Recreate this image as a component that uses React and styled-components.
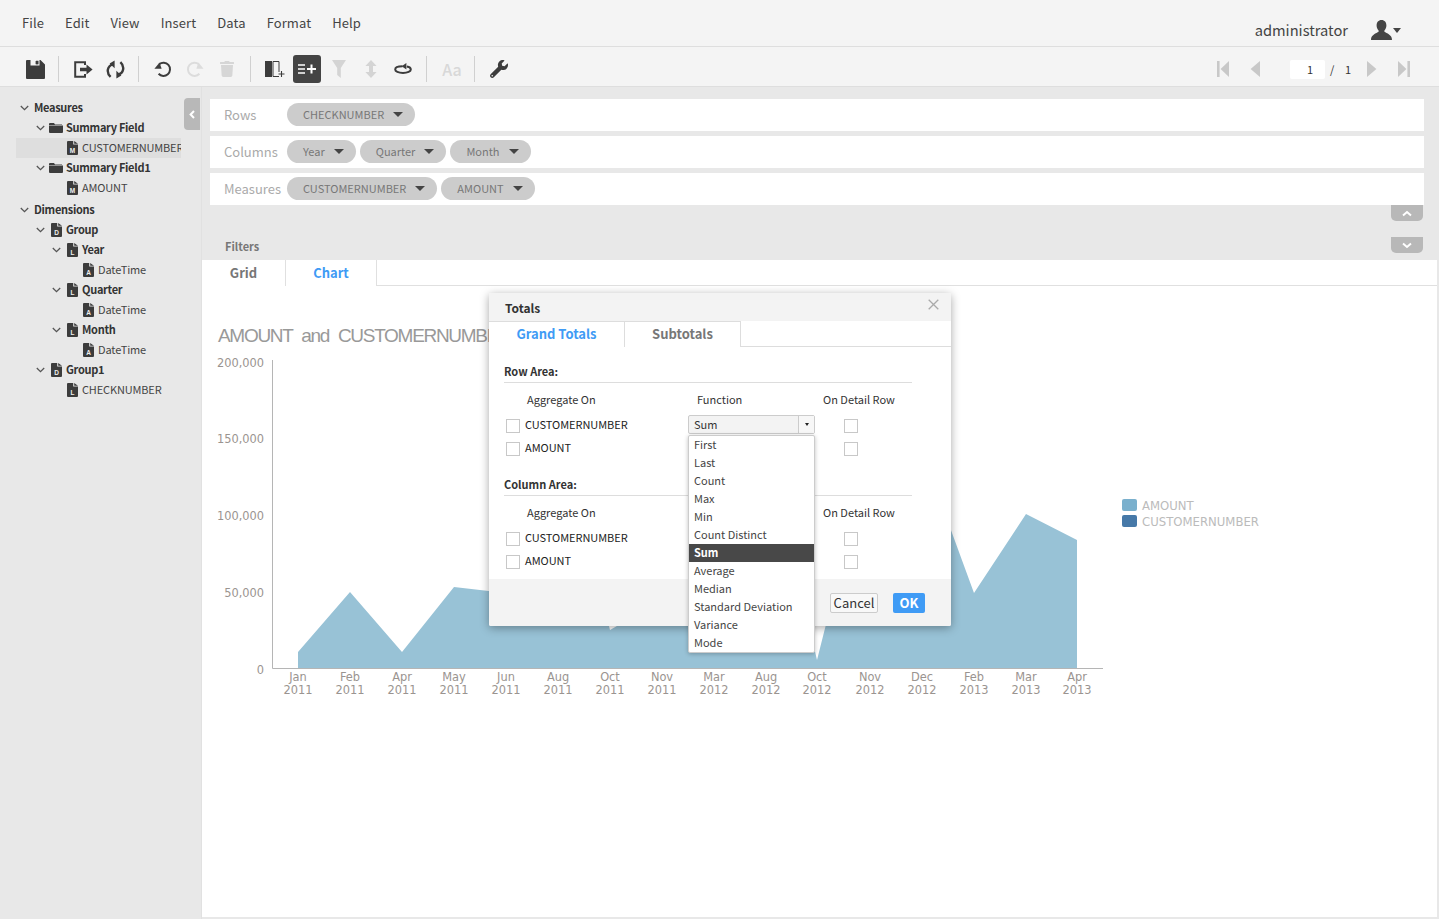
import React from "react";
import styled, { createGlobalStyle } from "styled-components";
import { FaWrench, FaTrash } from "react-icons/fa";

const FONT = '"Noto Sans CJK SC", "Noto Sans", sans-serif';

const GlobalStyle = createGlobalStyle`
  html, body {
    margin: 0;
    padding: 0;
    height: 100%;
    background: #e8e8e8;
    font-family: ${FONT};
    color: #333;
  }
  * {
    box-sizing: border-box;
  }
`;

const Page = styled.div`
  position: relative;
  width: 1439px;
  height: 919px;
  display: flex;
  flex-direction: column;
  overflow: hidden;
`;

const MenuBar = styled.div`
  height: 47px;
  flex: none;
  display: flex;
  justify-content: space-between;
  background: #f4f4f4;
  border-bottom: 1px solid #dedede;
  padding: 0 38px 0 22px;
`;

const Menu = styled.div`
  display: flex;
  gap: 21px;
  height: 46px;
  align-items: center;
`;

const MenuItem = styled.span`
  font-size: 13px;
  line-height: 20px;
  letter-spacing: 0.1px;
  color: #444;
`;

const UserArea = styled.div`
  display: flex;
  align-items: center;
  height: 46px;
  padding-top: 14px;
`;

const UserName = styled.span`
  font-size: 14.7px;
  line-height: 20px;
  color: #444;
  margin-right: 23px;
`;

const UserCaret = styled.span`
  width: 0;
  height: 0;
  margin-left: 1px;
  border-left: 4.5px solid transparent;
  border-right: 4.5px solid transparent;
  border-top: 5px solid #444;
`;

const Toolbar = styled.div`
  height: 40px;
  flex: none;
  display: flex;
  align-items: center;
  justify-content: space-between;
  background: #f4f4f4;
  border-bottom: 1px solid #dedede;
  padding: 5px 19px 0;
`;

const ToolGroup = styled.div`
  display: flex;
  align-items: center;
`;

const ToolButton = styled.span`
  width: 32px;
  height: 28px;
  display: flex;
  align-items: center;
  justify-content: center;
  color: ${(p) => (p.$off ? "#d6d6d6" : "#3c3c3c")};
  font-size: ${(p) => p.$size || 18}px;
`;

const ActiveTool = styled.span`
  width: 28px;
  height: 28px;
  margin: 0 2px;
  border-radius: 3px;
  background: #444;
  display: flex;
  align-items: center;
  justify-content: center;
`;

const AaGlyph = styled.span`
  font-size: 16px;
  font-weight: 500;
  line-height: 20px;
  color: #d8d8d8;
  margin-left: 2px;
`;

const ToolDivider = styled.span`
  width: 1px;
  height: 26px;
  margin: 0 8px 0 7px;
  background: #d0d0d0;
`;

const Pager = styled.div`
  display: flex;
  align-items: center;
`;

const PagerIcon = styled.span`
  width: 32px;
  display: flex;
  justify-content: center;
`;

const PageInput = styled.span`
  width: 35px;
  height: 19px;
  margin-left: 19px;
  padding-right: 12px;
  background: #fff;
  border-radius: 2px;
  text-align: right;
  font-size: 11px;
  line-height: 19px;
  color: #333;
`;

const PageOf = styled.span`
  font-size: 11px;
  line-height: 19px;
  color: #333;
  margin: 0 5px;
  width: 21px;
  display: flex;
  justify-content: space-between;
`;

const Body = styled.div`
  flex: 1;
  display: flex;
  min-height: 0;
`;

const Sidebar = styled.div`
  position: relative;
  width: 202px;
  flex: none;
  background: #e8e8e8;
  border-right: 1px solid #e1e1e1;
  padding: 11px 0 0 16px;
`;

const CollapseTab = styled.span`
  position: absolute;
  top: 11px;
  right: 1px;
  width: 16px;
  height: 32px;
  background: #b8b8b8;
  border-radius: 4px 0 0 4px;
  display: flex;
  align-items: center;
  justify-content: center;
`;

const Tree = styled.div`
  width: 165px;
`;

const TreeRow = styled.div`
  height: 20px;
  display: flex;
  align-items: center;
  overflow: hidden;
  white-space: nowrap;
  margin-top: ${(p) => (p.$gap ? "2px" : "0")};
  padding-left: ${(p) => 4 + p.$depth * 16}px;
  background: ${(p) => (p.$selected ? "#dedede" : "transparent")};
`;

const ChevronSlot = styled.span`
  width: 13px;
  flex: none;
  display: flex;
`;

const IconSlot = styled.span`
  width: 14px;
  margin-right: 3px;
  flex: none;
  display: flex;
  justify-content: center;
`;

const TreeLabel = styled.span`
  font-size: 11px;
  line-height: 18px;
  padding-bottom: 2px;
  font-weight: ${(p) => (p.$bold ? 700 : 400)};
  letter-spacing: ${(p) => (p.$bold ? "-0.3px" : "-0.15px")};
  margin-left: ${(p) => (p.$plain ? "1px" : "0")};
  color: ${(p) => (p.$bold ? "#333" : "#444")};
`;

const Main = styled.div`
  flex: 1;
  display: flex;
  flex-direction: column;
  min-width: 0;
  background: #fff;
  margin-right: 2px;
  margin-bottom: 2px;
`;

const BindingPanel = styled.div`
  height: 173px;
  flex: none;
  background: #e8e8e8;
  padding: 12px 0 0 8px;
  margin-right: -2px;
`;

const BindingRow = styled.div`
  height: 32px;
  width: 1214px;
  margin-bottom: 5px;
  padding: 4px 0 0 14px;
  background: #fff;
  display: flex;
  gap: 4px;
`;

const BindingLabel = styled.span`
  width: 59px;
  flex: none;
  font-size: 13px;
  line-height: 24px;
  color: #aaa;
  white-space: nowrap;
`;

const Chip = styled.span`
  height: 23px;
  display: flex;
  align-items: center;
  padding: 0 12px 0 16px;
  border-radius: 12px;
  background: #ccc;
  color: #777;
  font-size: 11px;
  line-height: 23px;
`;

const ChipCaret = styled.span`
  width: 0;
  height: 0;
  margin-left: 9px;
  border-left: 5px solid transparent;
  border-right: 5px solid transparent;
  border-top: 5px solid #444;
`;

const ShadeButton = styled.span`
  width: 32px;
  height: 16px;
  background: #b8b8b8;
  border-radius: 0 0 5px 5px;
  display: flex;
  align-items: center;
  justify-content: center;
`;

const ShadeUpRow = styled.div`
  height: 32px;
  margin-top: -5px;
  width: 1213px;
  display: flex;
  justify-content: flex-end;
`;

const FilterRow = styled.div`
  width: 1213px;
  display: flex;
  align-items: flex-start;
  justify-content: space-between;
  padding-left: 15px;
`;

const FilterLabel = styled.span`
  font-size: 11px;
  font-weight: 700;
  line-height: 19px;
  color: #777;
`;

const TabBar = styled.div`
  height: 26px;
  flex: none;
  display: flex;
  background: #fff;
  border-bottom: 1px solid #e0e0e0;
`;

const Tab = styled.span`
  width: ${(p) => p.$w}px;
  height: 26px;
  text-align: center;
  font-size: 13px;
  font-weight: 700;
  line-height: 25px;
  color: ${(p) => (p.$active ? "#3f9bf5" : "#777")};
  background: #fff;
  border-right: 1px solid #e0e0e0;
`;

const ChartArea = styled.div`
  flex: 1;
  background: #fff;
`;

const ChartSvg = styled.svg`
  display: block;
`;

const AxisText = styled.text`
  font-family: "DejaVu Sans", sans-serif;
  font-size: 11.4px;
  fill: #9a9490;
`;

const TitleText = styled.text`
  font-family: "Liberation Sans", sans-serif;
  font-size: 19px;
  letter-spacing: -1.3px;
  word-spacing: 5px;
  fill: #999;
`;

const LegendText = styled.text`
  font-family: "DejaVu Sans", sans-serif;
  font-size: 11.7px;
  fill: #bbb;
`;

const Dialog = styled.div`
  position: absolute;
  top: 293px;
  left: 489px;
  width: 462px;
  background: #fff;
  border-radius: 2px;
  box-shadow: 0 2px 10px rgba(0, 0, 0, 0.35);
`;

const DialogHead = styled.div`
  height: 28px;
  padding: 5px 12px 0 16px;
  background: #f3f3f3;
  display: flex;
  align-items: flex-start;
  justify-content: space-between;
  border-radius: 2px 2px 0 0;
`;

const DialogTitle = styled.span`
  font-size: 12px;
  font-weight: 700;
  line-height: 20px;
  color: #333;
`;

const DialogTabs = styled.div`
  height: 26px;
  display: flex;
  border-bottom: 1px solid #ddd;
`;

const DialogTab = styled.span`
  height: 26px;
  width: ${(p) => p.$w}px;
  text-align: center;
  font-size: 13px;
  font-weight: 700;
  line-height: 24px;
  color: ${(p) => (p.$active ? "#3f9bf5" : "#777")};
  background: #fff;
  border-top: 1px solid #ddd;
  border-right: 1px solid #ddd;
`;

const DialogBody = styled.div`
  padding: 15px 39px 6px 15px;
`;

const AreaTitle = styled.div`
  height: 21px;
  font-size: 11px;
  font-weight: 700;
  line-height: 19px;
  color: #333;
  border-bottom: 1px solid #ddd;
  margin-top: ${(p) => (p.$first ? "0" : "15px")};
`;

const AreaGrid = styled.div`
  display: grid;
  grid-template-columns: 184px 135px 1fr;
  grid-template-rows: 31px 23px 23px;
`;

const GridHead = styled.div`
  grid-column: 1 / 4;
  display: grid;
  grid-template-columns: 184px 135px 1fr;
  height: 31px;
  padding-top: 2px;
  font-size: 11px;
  line-height: 28px;
  color: #333;
`;

const HeadCell = styled.span`
  padding-left: ${(p) => p.$pad}px;
`;

const FieldCell = styled.div`
  display: flex;
  align-items: center;
  padding-left: 2px;
  gap: 5px;
  font-size: 11px;
  color: #222;
`;

const FieldName = styled.span`
  line-height: 16px;
  padding-bottom: 3px;
  letter-spacing: -0.05px;
`;

const CheckBox = styled.span`
  width: 14px;
  height: 14px;
  flex: none;
  display: block;
  background: #fff;
  border: 1px solid #c8c8c8;
  margin-left: ${(p) => p.$left || 0}px;
`;

const DetailCell = styled.div`
  display: flex;
  align-items: center;
`;

const SelectCell = styled.div`
  position: relative;
  display: flex;
  align-items: center;
`;

const SelectBox = styled.div`
  width: 127px;
  height: 19px;
  margin-bottom: 2px;
  display: flex;
  background: #f3f3f3;
  border: 1px solid #ccc;
  border-radius: 2px;
  font-size: 11px;
  line-height: 17px;
  color: #333;
`;

const SelectValue = styled.span`
  flex: 1;
  padding-left: 5px;
`;

const SelectArrow = styled.span`
  width: 16px;
  border-left: 1px solid #ccc;
  display: flex;
  align-items: center;
  justify-content: center;
  background: #f7f7f7;
  &::after {
    content: "";
    border-left: 2.5px solid transparent;
    border-right: 2.5px solid transparent;
    border-top: 3px solid #222;
  }
`;

const OptionList = styled.div`
  position: absolute;
  top: 21px;
  left: 0;
  width: 127px;
  background: #fff;
  border: 1px solid #ccc;
  border-radius: 2px;
  box-shadow: 0 1px 4px rgba(0, 0, 0, 0.25);
  z-index: 2;
`;

const Option = styled.div`
  height: 18px;
  padding-left: 5px;
  font-size: 11px;
  line-height: 16px;
  color: ${(p) => (p.$on ? "#fff" : "#444")};
  font-weight: ${(p) => (p.$on ? 700 : 400)};
  background: ${(p) => (p.$on ? "#484848" : "transparent")};
`;

const DialogFoot = styled.div`
  height: 47px;
  padding: 14px 26px 0 0;
  background: #f3f3f3;
  display: flex;
  justify-content: flex-end;
  gap: 15px;
  border-radius: 0 0 2px 2px;
`;

const CancelButton = styled.span`
  width: 48px;
  height: 20px;
  border: 1px solid #ccc;
  border-radius: 2px;
  background: #f8f8f8;
  text-align: center;
  font-size: 13px;
  line-height: 17px;
  color: #333;
`;

const OkButton = styled.span`
  width: 32px;
  height: 20px;
  border-radius: 2px;
  background: #3f9bf5;
  text-align: center;
  font-size: 13px;
  font-weight: 700;
  line-height: 19px;
  color: #fff;
`;

const Chevron = () => (
  <svg width="9" height="6" viewBox="0 0 9 6">
    <path d="M0.8 1 L4.5 4.6 L8.2 1" fill="none" stroke="#555" strokeWidth="1.3" />
  </svg>
);

const FolderIcon = () => (
  <svg width="14" height="10" viewBox="0 0 14 10">
    <path d="M0 2.5h14v6.5a1 1 0 0 1-1 1H1a1 1 0 0 1-1-1z M1 0h4l1 1.5h7v0.4H0V1a1 1 0 0 1 1-1z" fill="#3c3c3c" />
  </svg>
);

const FileIcon = ({ letter }) => (
  <svg width="11" height="14" viewBox="0 0 11 14">
    <path d="M1 0h5.2v3.6H11V13a1 1 0 0 1-1 1H1a1 1 0 0 1-1-1V1a1 1 0 0 1 1-1z M7.2 0L11 2.8H7.2z" fill="#3c3c3c" />
    <text x="5.5" y="12.2" textAnchor="middle" fontSize="6.5" fontWeight="700" fill="#f0f0f0" fontFamily="Liberation Sans, sans-serif">
      {letter}
    </text>
  </svg>
);

const SaveIcon = () => (
  <svg width="19" height="19" viewBox="0 0 19 19">
    <path
      fillRule="evenodd"
      d="M1 0h3.5v5.5h9V0h1L19 4.5V18a1 1 0 0 1-1 1H1a1 1 0 0 1-1-1V1a1 1 0 0 1 1-1z M10 0.8h2.4v3.4H10z"
      fill="#3c3c3c"
    />
    <rect x="9.6" y="1" width="2.6" height="3.2" fill="#3c3c3c" />
  </svg>
);

const ExportIcon = () => (
  <svg width="19" height="17" viewBox="0 0 19 17">
    <path d="M11 4V1.2H1.2v14.6H11V13" fill="none" stroke="#3c3c3c" strokeWidth="2" />
    <path d="M6 6.8h6.5V3.6L18.6 8.5l-6.1 4.9V10.2H6z" fill="#3c3c3c" />
  </svg>
);

const RefreshIcon = () => (
  <svg width="19" height="19" viewBox="0 0 19 19">
    <path d="M7 4.4C1.2 5.8 0 12.6 4.6 16.8" fill="none" stroke="#3c3c3c" strokeWidth="2.4" />
    <path d="M8.6 0.4v7.8L3.6 3.4z" fill="#3c3c3c" />
    <path d="M12 14.6C17.8 13.2 19 6.4 14.4 2.2" fill="none" stroke="#3c3c3c" strokeWidth="2.4" />
    <path d="M10.4 18.6v-7.8l5 4.8z" fill="#3c3c3c" />
  </svg>
);

const CircleArrow = ({ color, flip }) => (
  <svg width="18" height="18" viewBox="0 0 18 18" style={flip ? { transform: "scaleX(-1)" } : undefined}>
    <path d="M5.2 4.2A6.6 6.6 0 1 1 4.6 13.8" fill="none" stroke={color} strokeWidth="2" />
    <path d="M0.4 8.8h7.2L5.6 2.6z" fill={color} />
  </svg>
);

const ColumnsAddIcon = () => (
  <svg width="20" height="18" viewBox="0 0 20 18">
    <rect x="0" y="1" width="7" height="16" fill="#3c3c3c" />
    <path d="M8 1.5h6V12M14 16.5H8V1.5" fill="none" stroke="#3c3c3c" />
    <path d="M13.5 14h6M16.5 11v6" stroke="#3c3c3c" strokeWidth="1.1" />
  </svg>
);

const RowsAddIcon = () => (
  <svg width="18" height="12" viewBox="0 0 18 12">
    <path d="M0 2h7M0 6h7M0 10h7" stroke="#fff" strokeWidth="1.6" />
    <path d="M9 6h9M13.5 1.5v9" stroke="#fff" strokeWidth="2" />
  </svg>
);

const FunnelIcon = () => (
  <svg width="14" height="18" viewBox="0 0 14 18">
    <path d="M0 0h14L8.8 8v10L5.2 15V8z" fill="#d4d4d4" />
  </svg>
);

const UpDownIcon = () => (
  <svg width="12" height="18" viewBox="0 0 12 18">
    <path d="M6 0l5.6 6H8v6h3.6L6 18 0.4 12H4V6H0.4z" fill="#d4d4d4" />
  </svg>
);

const LoopIcon = () => (
  <svg width="18" height="12" viewBox="0 0 18 12">
    <path d="M8.5 3.2C3.6 3.2 1.2 4.6 1.2 6.4 1.2 8.4 4.4 10 9 10s7.8-1.6 7.8-3.6c0-1.4-1.4-2.6-4-3" fill="none" stroke="#3c3c3c" strokeWidth="2" />
    <path d="M12.4 0L7.6 3.2l4.8 3.2z" fill="#3c3c3c" />
  </svg>
);

const PagerGlyph = ({ kind }) => {
  const flip = kind === "last" || kind === "next";
  const bar = kind === "first" || kind === "last";
  return (
    <svg width="12" height="16" viewBox="0 0 12 16" style={flip ? { transform: "scaleX(-1)" } : undefined}>
      {bar && <rect x="0" y="0" width="2.6" height="16" fill="#c8c8c8" />}
      <path d={bar ? "M12 0v16L3.6 8z" : "M11 0v16L1.6 8z"} fill="#c8c8c8" />
    </svg>
  );
};

const UserIcon = () => (
  <svg width="21" height="20" viewBox="0 0 21 20">
    <path
      d="M10.5 0C7.4 0 5.6 2.4 5.6 5.4c0 2 .8 3.8 2 5v1.4C5.4 13.4 0 14.6 0 20h21c0-5.4-5.4-6.6-7.6-8.2v-1.4c1.2-1.2 2-3 2-5C15.4 2.4 13.6 0 10.5 0z"
      fill="#444"
    />
  </svg>
);

const SmallChevron = ({ dir }) => {
  const d = { left: "M5 1L1.6 4.5L5 8", up: "M1 5.4L5 2L9 5.4", down: "M1 1.6L5 5L9 1.6" }[dir];
  return (
    <svg width={dir === "left" ? 7 : 10} height={dir === "left" ? 9 : 7} viewBox={dir === "left" ? "0 0 7 9" : "0 0 10 7"}>
      <path d={d} fill="none" stroke="#fff" strokeWidth="2" />
    </svg>
  );
};

const CloseIcon = () => (
  <svg width="11" height="11" viewBox="0 0 11 11" style={{ marginTop: "1px" }}>
    <path d="M0.7 0.7L10.3 10.3M10.3 0.7L0.7 10.3" stroke="#aaa" strokeWidth="1.3" />
  </svg>
);

const treeRows = [
  { depth: 0, open: true, label: "Measures", bold: true },
  { depth: 1, open: true, label: "Summary Field", bold: true, icon: "folder" },
  { depth: 2, label: "CUSTOMERNUMBER", icon: "M", selected: true },
  { depth: 1, open: true, label: "Summary Field1", bold: true, icon: "folder" },
  { depth: 2, label: "AMOUNT", icon: "M" },
  { depth: 0, open: true, label: "Dimensions", bold: true, gap: true },
  { depth: 1, open: true, label: "Group", bold: true, icon: "D" },
  { depth: 2, open: true, label: "Year", bold: true, icon: "L" },
  { depth: 3, label: "DateTime", icon: "A" },
  { depth: 2, open: true, label: "Quarter", bold: true, icon: "L" },
  { depth: 3, label: "DateTime", icon: "A" },
  { depth: 2, open: true, label: "Month", bold: true, icon: "L" },
  { depth: 3, label: "DateTime", icon: "A" },
  { depth: 1, open: true, label: "Group1", bold: true, icon: "D" },
  { depth: 2, label: "CHECKNUMBER", icon: "L" },
];

const bindings = [
  { label: "Rows", chips: ["CHECKNUMBER"] },
  { label: "Columns", chips: ["Year", "Quarter", "Month"] },
  { label: "Measures", chips: ["CUSTOMERNUMBER", "AMOUNT"] },
];

const functions = [
  "First",
  "Last",
  "Count",
  "Max",
  "Min",
  "Count Distinct",
  "Sum",
  "Average",
  "Median",
  "Standard Deviation",
  "Variance",
  "Mode",
];

const BASE_Y = 668;
const points = [
  ["Jan", "2011", 298, 652],
  ["Feb", "2011", 350, 592],
  ["Apr", "2011", 402, 652],
  ["May", "2011", 454, 587],
  ["Jun", "2011", 506, 593],
  ["Aug", "2011", 558, 420],
  ["Oct", "2011", 610, 630],
  ["Nov", "2011", 662, 600],
  ["Mar", "2012", 714, 480],
  ["Aug", "2012", 766, 440],
  ["Oct", "2012", 817, 660],
  ["Nov", "2012", 870, 450],
  ["Dec", "2012", 922, 451],
  ["Feb", "2013", 974, 593],
  ["Mar", "2013", 1026, 514],
  ["Apr", "2013", 1077, 540],
];

const yTicks = [
  ["200,000", 362],
  ["150,000", 438],
  ["100,000", 515],
  ["50,000", 592],
  ["0", 669],
];

const areaPath =
  `M${points[0][2]} ${BASE_Y} ` +
  points.map((p) => `L${p[2]} ${p[3]}`).join(" ") +
  ` L${points[points.length - 1][2]} ${BASE_Y} Z`;

const AreaSection = ({ title, first, withSelect }) => (
  <>
    <AreaTitle $first={first}>{title}</AreaTitle>
    <AreaGrid>
      <GridHead>
        <HeadCell $pad={23}>Aggregate On</HeadCell>
        <HeadCell $pad={9}>{withSelect ? "Function" : ""}</HeadCell>
        <HeadCell $pad={0}>On Detail Row</HeadCell>
      </GridHead>
      <FieldCell>
        <CheckBox />
        <FieldName>CUSTOMERNUMBER</FieldName>
      </FieldCell>
      <SelectCell>
        {withSelect && (
          <>
            <SelectBox>
              <SelectValue>Sum</SelectValue>
              <SelectArrow />
            </SelectBox>
            <OptionList>
              {functions.map((f) => (
                <Option key={f} $on={f === "Sum"}>
                  {f}
                </Option>
              ))}
            </OptionList>
          </>
        )}
      </SelectCell>
      <DetailCell>
        <CheckBox $left={21} />
      </DetailCell>
      <FieldCell>
        <CheckBox />
        <FieldName>AMOUNT</FieldName>
      </FieldCell>
      <SelectCell />
      <DetailCell>
        <CheckBox $left={21} />
      </DetailCell>
    </AreaGrid>
  </>
);

const App = () => (
  <Page>
    <GlobalStyle />
    <MenuBar>
      <Menu>
        {["File", "Edit", "View", "Insert", "Data", "Format", "Help"].map((m) => (
          <MenuItem key={m}>{m}</MenuItem>
        ))}
      </Menu>
      <UserArea>
        <UserName>administrator</UserName>
        <UserIcon />
        <UserCaret />
      </UserArea>
    </MenuBar>
    <Toolbar>
      <ToolGroup>
        <ToolButton><SaveIcon /></ToolButton>
        <ToolDivider />
        <ToolButton><ExportIcon /></ToolButton>
        <ToolButton><RefreshIcon /></ToolButton>
        <ToolDivider />
        <ToolButton><CircleArrow color="#3c3c3c" /></ToolButton>
        <ToolButton><CircleArrow color="#dcdcdc" flip /></ToolButton>
        <ToolButton $off $size={16}><FaTrash /></ToolButton>
        <ToolDivider />
        <ToolButton><ColumnsAddIcon /></ToolButton>
        <ActiveTool><RowsAddIcon /></ActiveTool>
        <ToolButton><FunnelIcon /></ToolButton>
        <ToolButton><UpDownIcon /></ToolButton>
        <ToolButton><LoopIcon /></ToolButton>
        <ToolDivider />
        <ToolButton><AaGlyph>Aa</AaGlyph></ToolButton>
        <ToolDivider />
        <ToolButton><FaWrench /></ToolButton>
      </ToolGroup>
      <Pager>
        <PagerIcon><PagerGlyph kind="first" /></PagerIcon>
        <PagerIcon><PagerGlyph kind="prev" /></PagerIcon>
        <PageInput>1</PageInput>
        <PageOf>
          <span>/</span>
          <span>1</span>
        </PageOf>
        <PagerIcon><PagerGlyph kind="next" /></PagerIcon>
        <PagerIcon><PagerGlyph kind="last" /></PagerIcon>
      </Pager>
    </Toolbar>
    <Body>
      <Sidebar>
        <CollapseTab><SmallChevron dir="left" /></CollapseTab>
        <Tree>
          {treeRows.map((r, i) => (
            <TreeRow key={i} $depth={r.depth} $gap={r.gap} $selected={r.selected}>
              <ChevronSlot>{r.open && <Chevron />}</ChevronSlot>
              {r.icon && (
                <IconSlot>
                  {r.icon === "folder" ? <FolderIcon /> : <FileIcon letter={r.icon} />}
                </IconSlot>
              )}
              <TreeLabel $bold={r.bold} $plain={!r.icon}>{r.label}</TreeLabel>
            </TreeRow>
          ))}
        </Tree>
      </Sidebar>
      <Main>
        <BindingPanel>
          {bindings.map((b) => (
            <BindingRow key={b.label}>
              <BindingLabel>{b.label}</BindingLabel>
              {b.chips.map((c) => (
                <Chip key={c}>
                  {c}
                  <ChipCaret />
                </Chip>
              ))}
            </BindingRow>
          ))}
          <ShadeUpRow>
            <ShadeButton><SmallChevron dir="up" /></ShadeButton>
          </ShadeUpRow>
          <FilterRow>
            <FilterLabel>Filters</FilterLabel>
            <ShadeButton><SmallChevron dir="down" /></ShadeButton>
          </FilterRow>
        </BindingPanel>
        <TabBar>
          <Tab $w={84}>Grid</Tab>
          <Tab $w={91} $active>Chart</Tab>
        </TabBar>
        <ChartArea>
          <ChartSvg width="1235" height="440" viewBox="202 286 1235 440">
            <TitleText x="218" y="342">AMOUNT and CUSTOMERNUMBER</TitleText>
            {yTicks.map(([t, y]) => (
              <AxisText key={t} x="264" y={y + 5} textAnchor="end">{t}</AxisText>
            ))}
            <path d={areaPath} fill="#98c2d6" />
            <path d="M272.5 360V668.5H1103" fill="none" stroke="#b5b5b5" />
            {points.map(([m, year, x]) => (
              <g key={m + year}>
                <AxisText x={x} y="681" textAnchor="middle">{m}</AxisText>
                <AxisText x={x} y="694" textAnchor="middle">{year}</AxisText>
              </g>
            ))}
            <rect x="1122" y="499" width="15" height="12" rx="2" fill="#7ab0cd" />
            <rect x="1122" y="515" width="15" height="12" rx="2" fill="#4679a8" />
            <LegendText x="1142" y="510">AMOUNT</LegendText>
            <LegendText x="1142" y="526">CUSTOMERNUMBER</LegendText>
          </ChartSvg>
        </ChartArea>
      </Main>
    </Body>
    <Dialog>
      <DialogHead>
        <DialogTitle>Totals</DialogTitle>
        <CloseIcon />
      </DialogHead>
      <DialogTabs>
        <DialogTab $w={136} $active>Grand Totals</DialogTab>
        <DialogTab $w={116}>Subtotals</DialogTab>
      </DialogTabs>
      <DialogBody>
        <AreaSection title="Row Area:" first withSelect />
        <AreaSection title="Column Area:" />
      </DialogBody>
      <DialogFoot>
        <CancelButton>Cancel</CancelButton>
        <OkButton>OK</OkButton>
      </DialogFoot>
    </Dialog>
  </Page>
);

export default App;
